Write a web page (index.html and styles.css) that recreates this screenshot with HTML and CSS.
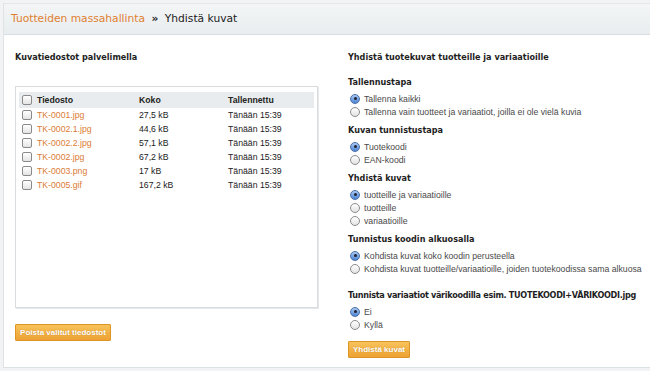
FILE: index.html
```
<!DOCTYPE html>
<html lang="fi">
<head>
    <meta charset="UTF-8">
    <title>Yhdistä kuvat</title>
    <link rel="stylesheet" href="styles.css">
</head>
<body>
    <div class="wrap">
        <div class="crumbs">
            <a href="#">Tuotteiden massahallinta</a>
            <span class="sep">&raquo;</span>
            <span class="current">Yhdistä kuvat</span>
        </div>

        <div class="main">
            <!-- files on server -->
            <div class="left">
                <h2>Kuvatiedostot palvelimella</h2>
                <div class="filebox">
                    <div class="row head">
                        <span class="check"></span>
                        <span>Tiedosto</span>
                        <span>Koko</span>
                        <span>Tallennettu</span>
                    </div>
                    <div class="row"><span class="check"></span><a href="#">TK-0001.jpg</a><span>27,5 kB</span><span>Tänään 15:39</span></div>
                    <div class="row"><span class="check"></span><a href="#">TK-0002.1.jpg</a><span>44,6 kB</span><span>Tänään 15:39</span></div>
                    <div class="row"><span class="check"></span><a href="#">TK-0002.2.jpg</a><span>57,1 kB</span><span>Tänään 15:39</span></div>
                    <div class="row"><span class="check"></span><a href="#">TK-0002.jpg</a><span>67,2 kB</span><span>Tänään 15:39</span></div>
                    <div class="row"><span class="check"></span><a href="#">TK-0003.png</a><span>17 kB</span><span>Tänään 15:39</span></div>
                    <div class="row"><span class="check"></span><a href="#">TK-0005.gif</a><span>167,2 kB</span><span>Tänään 15:39</span></div>
                </div>
                <button class="btn">Poista valitut tiedostot</button>
            </div>

            <!-- matching options -->
            <div class="right">
                <h2 class="title">Yhdistä tuotekuvat tuotteille ja variaatioille</h2>

                <h3>Tallennustapa</h3>
                <div class="opt"><span class="radio on"></span>Tallenna kaikki</div>
                <div class="opt"><span class="radio"></span>Tallenna vain tuotteet ja variaatiot, joilla ei ole vielä kuvia</div>

                <h3>Kuvan tunnistustapa</h3>
                <div class="opt"><span class="radio on"></span>Tuotekoodi</div>
                <div class="opt"><span class="radio"></span>EAN-koodi</div>

                <h3>Yhdistä kuvat</h3>
                <div class="opt"><span class="radio on"></span>tuotteille ja variaatioille</div>
                <div class="opt"><span class="radio"></span>tuotteille</div>
                <div class="opt"><span class="radio"></span>variaatioille</div>

                <h3>Tunnistus koodin alkuosalla</h3>
                <div class="opt"><span class="radio on"></span>Kohdista kuvat koko koodin perusteella</div>
                <div class="opt"><span class="radio"></span>Kohdista kuvat tuotteille/variaatioille, joiden tuotekoodissa sama alkuosa</div>

                <h3 class="spaced">Tunnista variaatiot värikoodilla esim. TUOTEKOODI+VÄRIKOODI.jpg</h3>
                <div class="opt"><span class="radio on"></span>Ei</div>
                <div class="opt"><span class="radio"></span>Kyllä</div>

                <button class="btn">Yhdistä kuvat</button>
            </div>
        </div>
    </div>
</body>
</html>
```

FILE: styles.css
```
body {
    margin: 0;
    background-color: #f1f3f4;
    font-family: "Liberation Sans", Arial, sans-serif;
    font-size: 8.7px;
    color: #444;
}

.wrap {
    margin: 3px 0 0 3px;
    height: 365px;
    box-sizing: border-box;
    background-color: #fff;
    border-left: 1px solid #dfe3e5;
    border-bottom: 1px solid #dbe0e2;
    overflow: hidden;
}

.crumbs {
    height: 30px;
    line-height: 30px;
    padding-left: 7px;
    background: linear-gradient(#f3f5f6, #e9edef);
    border-top: 1px solid #e3e7e9;
    border-bottom: 1px solid #d8dee1;
    font-family: "DejaVu Sans", Verdana, sans-serif;
    font-size: 10.7px;
    color: #222;
    white-space: nowrap;
}

.crumbs a {
    color: #e07f30;
    text-decoration: none;
}

.crumbs .sep {
    font-weight: bold;
    margin: 0 3px;
}

.main {
    display: grid;
    grid-template-columns: 330px 1fr;
}

h2, h3 {
    margin: 0;
    font-family: "DejaVu Sans", Verdana, sans-serif;
    font-size: 8.1px;
    line-height: 12px;
    font-weight: bold;
    color: #1e1e1e;
    white-space: nowrap;
}

.left {
    padding: 16px 0 0 11px;
}

.left h2 {
    margin-bottom: 23px;
}

.filebox {
    width: 303px;
    height: 222px;
    box-sizing: border-box;
    border: 1px solid #d9dcde;
    box-shadow: 1px 1px 0 #e6e8e9;
    padding: 5px 3px;
}

.row {
    display: grid;
    grid-template-columns: 18px 102px 89px 1fr;
    align-items: center;
    height: 14px;
    color: #222;
}

.row.head {
    height: 16px;
    background-color: #e8ecee;
    font-weight: bold;
}

.row a {
    color: #dc7b34;
    text-decoration: none;
}

.check {
    width: 8px;
    height: 8px;
    margin-left: 3px;
    border: 1px solid #8a8a8a;
    border-radius: 2px;
    background: linear-gradient(#fff, #e4e4e4);
}

.btn {
    display: block;
    height: 17px;
    padding: 0 4px;
    border: 1px solid #dd9626;
    border-radius: 1px;
    background: linear-gradient(#f8c35a, #eda132);
    color: #fff;
    font-family: "Liberation Sans", Arial, sans-serif;
    font-size: 8px;
    font-weight: bold;
    white-space: nowrap;
    text-shadow: 0 0 1px rgba(150, 90, 0, 0.5);
}

.left .btn {
    margin-top: 16px;
    width: 96px;
}

.right {
    padding: 16px 0 0 14px;
}

.right .title {
    margin-bottom: 13px;
}

.right h3 {
    margin: 6px 0 4px;
}

.right h3.spaced {
    margin-top: 14px;
    letter-spacing: -0.3px;
}

.right .title + h3 {
    margin-top: 0;
}

.opt {
    display: flex;
    align-items: center;
    height: 13px;
    color: #4a4a4a;
    white-space: nowrap;
}

.radio {
    flex: none;
    width: 8px;
    height: 8px;
    margin: 0 4px 0 2px;
    border: 1px solid #8c8c8c;
    border-radius: 50%;
    background: linear-gradient(#fff, #e2e2e2);
    display: flex;
    align-items: center;
    justify-content: center;
}

.radio.on {
    border-color: #4a6fa8;
    background: linear-gradient(#a8c8f0, #4f86d6);
}

.radio.on::after {
    content: "";
    width: 3px;
    height: 3px;
    border-radius: 50%;
    background-color: #1b2230;
}

.right .btn {
    margin-top: 10px;
    width: 62px;
    padding: 0;
}
```
